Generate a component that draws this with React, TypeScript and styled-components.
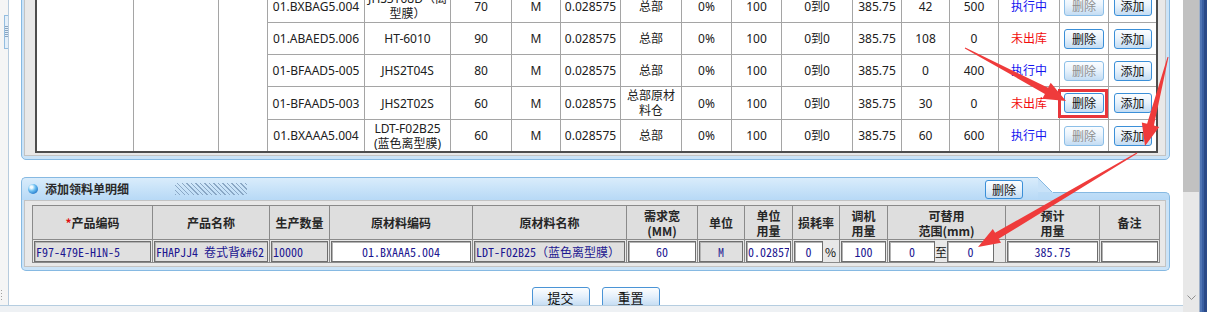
import React from "react";
import styled, { createGlobalStyle } from "styled-components";

const GlobalStyle = createGlobalStyle`
  html, body { margin: 0; padding: 0; background: #fff; }
  body { font-family: "Noto Sans", "Noto Sans CJK SC", sans-serif; font-size: 12px; color: #202020; }
  #root { width: 1207px; height: 312px; overflow: hidden; }
`;

const BLUE_LINE = "#86b9e2";
const PANEL_FILL = "#cbe3f7";
const UI_CJK = `"Noto Sans CJK SC", "Noto Sans", sans-serif`;
const MONO = `"Noto Sans Mono CJK SC", "Liberation Mono", monospace`;

const Screen = styled.div`
  position: relative;
  width: 1207px;
  height: 312px;
  display: flex;
  overflow: hidden;
  background: #fff;
`;

const Workspace = styled.div`
  width: 1183px;
  display: flex;
  flex-direction: column;
`;

const WorkRow = styled.div`
  display: flex;
  height: 305px;
`;

const SideStrip = styled.div`
  width: 9px;
  box-sizing: border-box;
  border-right: 1px solid #b7cbdd;
  background: #f5f5f5;
  display: flex;
  flex-direction: column;
  justify-content: space-between;
  padding: 15px 0 4px 0;
`;

const SideHandle = styled.div`
  align-self: flex-end;
  width: 3px;
  height: 32px;
  border: 1px solid #93bde0;
  border-right: none;
  background: repeating-linear-gradient(to bottom, #8aa5c0 0 1px, #e4eff9 1px 2px) center / 100% 12px no-repeat,
    #e4eff9;
`;

const SideGrip = styled.div`
  width: 4px;
  height: 12px;
  background: radial-gradient(circle, #a0a0a0 0 0.7px, transparent 0.8px) 0 0 / 3px 3px repeat-y;
`;

const Content = styled.main`
  width: 1174px;
  height: 305px;
  box-sizing: border-box;
  padding-left: 12px;
  overflow: hidden;
  background: #fff;
`;

const StatusBar = styled.footer`
  height: 7px;
  box-sizing: border-box;
  border-top: 1px solid #b5cde0;
  background: #eef1f4;
`;

const ScrollBar = styled.div`
  width: 16px;
  height: 312px;
  display: flex;
  flex-direction: column;
  background: #e8e8e8;
`;

const ScrollThumb = styled.div`
  height: 192px;
  background: #c1c1c1;
`;

const ScrollTrack = styled.div`
  flex: 1;
  display: flex;
  align-items: flex-end;
  justify-content: center;
  padding-bottom: 11px;
`;

const WindowEdge = styled.div`
  width: 8px;
  height: 312px;
  background: linear-gradient(to right, #9fb0c8 0 1px, #4f74b4 1px 3px, #3a5fa2 3px 5px, #2b4a88 5px);
`;

/* ---------- framed panel ---------- */

const ListPanel = styled.section`
  width: 1149px;
  box-sizing: border-box;
  margin-top: -18px;
  border: 1px solid ${BLUE_LINE};
  border-radius: 5px;
  background: ${PANEL_FILL};
  padding: 2px 3px 3px 2px;
`;

const PanelInner = styled.div<{ $pad: string }>`
  border: 1px solid #c3c3c3;
  background: #e8e8e8;
  padding: ${(p) => p.$pad};
`;

/* ---------- list table ---------- */

const ListTable = styled.table`
  width: 1123px;
  table-layout: fixed;
  border-collapse: separate;
  border-spacing: 0;
  border: 2px solid #4d4d4d;
  background: #fff;
`;

const ListRow = styled.tr<{ $h: number }>`
  height: ${(p) => p.$h}px;
`;

const ListCell = styled.td<{ $tone?: "run" | "wait"; $span?: boolean }>`
  padding: 0 2px;
  border-right: 1px solid #a5a5a5;
  border-bottom: ${(p) => (p.$span ? "none" : "1px solid #a5a5a5")};
  text-align: center;
  vertical-align: middle;
  font-size: 12px;
  line-height: 15px;
  white-space: nowrap;
  color: ${(p) => (p.$tone === "run" ? "#1414f0" : p.$tone === "wait" ? "#f20d0d" : "#202020")};
  tr:last-child > & { border-bottom: none; }
  &:last-child { border-right: none; }
`;

const RowButton = styled.button<{ $w: number; $off?: boolean }>`
  width: ${(p) => p.$w}px;
  height: 20px;
  padding: 0;
  font-family: ${UI_CJK};
  font-size: 12px;
  line-height: 18px;
  color: ${(p) => (p.$off ? "#8e8e8e" : "#111")};
  border: 1px solid ${(p) => (p.$off ? "#8cbfe8" : "#3a8fd8")};
  border-radius: 3px;
  background: linear-gradient(#fbfdff, #e9f3fc 45%, #c3dcf3);
  cursor: default;
`;

/* ---------- detail panel ---------- */

const DetailPanel = styled.section`
  width: 1149px;
  margin-top: 17px;
`;

const DetailHeader = styled.header`
  display: flex;
  align-items: flex-end;
  height: 23px;
`;

const TabMain = styled.div`
  flex: 1;
  height: 23px;
  box-sizing: border-box;
  border-top: 1px solid ${BLUE_LINE};
  border-left: 1px solid ${BLUE_LINE};
  border-top-left-radius: 5px;
  background: linear-gradient(#d9ecfb, #b7d9f6);
  display: flex;
  align-items: center;
  padding: 0 15px 0 6px;
`;

const TabSlope = styled.div`
  width: 15px;
  height: 23px;
  background: linear-gradient(to top right, #c8e2f8 calc(50% - 0.8px), ${BLUE_LINE} calc(50% - 0.8px) 50%, transparent 50%)
      top / 15px 15px no-repeat,
    linear-gradient(#bddcf6, #b7d9f6) bottom / 15px 8px no-repeat;
`;

const TabRight = styled.div`
  width: 117px;
  height: 8px;
  box-sizing: border-box;
  border-top: 1px solid ${BLUE_LINE};
  border-right: 1px solid ${BLUE_LINE};
  border-top-right-radius: 5px;
  background: linear-gradient(#bfddf7, #b7d9f6);
`;

const Orb = styled.span`
  width: 10px;
  height: 10px;
  border-radius: 50%;
  background: radial-gradient(circle at 35% 32%, #f2fbff 0 12%, #6cc0f2 40%, #2a7fcf 75%, #1b5da6);
`;

const PanelTitle = styled.h2`
  margin: 0 0 0 7px;
  font-family: ${UI_CJK};
  font-size: 12px;
  font-weight: 700;
  color: #2a2a2a;
  line-height: 16px;
`;

const Hatch = styled.span`
  margin-left: 46px;
  width: 72px;
  height: 12px;
  background: repeating-linear-gradient(45deg, #7f9dbc 0 1px, transparent 1px 3.2px);
  opacity: 0.85;
`;

const HeaderButton = styled.button`
  margin-left: auto;
  width: 38px;
  height: 19px;
  padding: 0;
  font-family: ${UI_CJK};
  font-size: 12px;
  line-height: 17px;
  color: #111;
  border: 1px solid #3a8fd8;
  border-radius: 3px;
  background: linear-gradient(#fbfdff, #e9f3fc 45%, #c3dcf3);
`;

const DetailBody = styled.div`
  box-sizing: border-box;
  border: 1px solid ${BLUE_LINE};
  border-top: none;
  border-radius: 0 0 5px 5px;
  background: ${PANEL_FILL};
  padding: 0 3px 3px 2px;
`;

const DetailTable = styled.table`
  width: 1128px;
  table-layout: fixed;
  border-collapse: separate;
  border-spacing: 0;
  border: 1px solid #8a8a8a;
`;

const HeadRow = styled.tr`
  height: 34px;
`;

const HeadCell = styled.th`
  padding: 0;
  background: #dedede;
  border-right: 1px solid #8a8a8a;
  border-bottom: 1px solid #8a8a8a;
  font-family: ${UI_CJK};
  font-size: 12px;
  font-weight: 700;
  line-height: 15px;
  color: #262626;
  text-align: center;
  vertical-align: middle;
  &:last-child { border-right: none; }
`;

const Required = styled.span`
  color: #e01010;
`;

const DataRow = styled.tr`
  height: 22px;
`;

const DataCell = styled.td`
  padding: 0 1px;
  background: #e8e8e8;
  border-right: 1px solid #8a8a8a;
  vertical-align: middle;
  &:last-child { border-right: none; }
`;

const CellFlex = styled.div`
  display: flex;
  align-items: center;
  font-family: ${UI_CJK};
  font-size: 12px;
  color: #111;
`;

const Field = styled.input<{ $ro?: boolean; $align?: string; $w?: number }>`
  box-sizing: border-box;
  width: ${(p) => (p.$w ? `${p.$w}px` : "100%")};
  height: 21px;
  margin: 0;
  padding: 0 1px;
  border: 1px solid #6e6e6e;
  box-shadow: inset 1px 1px 0 #b4b4b4;
  border-radius: 0;
  outline: none;
  background: ${(p) => (p.$ro ? "#e0e0e0" : "#fff")};
  font-family: ${MONO};
  font-size: 12px;
  color: #1c1690;
  text-align: ${(p) => p.$align || "left"};
`;

const Unit = styled.span<{ $gap: number }>`
  margin: 0 ${(p) => p.$gap}px;
`;

/* ---------- actions ---------- */

const Actions = styled.div`
  width: 1149px;
  display: flex;
  justify-content: center;
  gap: 12px;
  margin-top: 16px;
`;

const ActionButton = styled.button`
  width: 58px;
  height: 22px;
  padding: 0;
  font-family: ${UI_CJK};
  font-size: 13px;
  line-height: 20px;
  color: #111;
  border: 1px solid #4a94d6;
  border-radius: 3px;
  background: linear-gradient(#fdfeff, #e3effb 45%, #bcd7f0);
`;

const Annotations = styled.svg`
  position: absolute;
  left: 0;
  top: 0;
  pointer-events: none;
`;

type Row = {
  code: string;
  name: string[];
  width: string;
  store: string[];
  qty: string;
  out: string;
  status: "执行中" | "未出库";
  h: number;
};

const rows: Row[] = [
  { code: "01.BXBAG5.004", name: ["JHS3T08D（离", "型膜）"], width: "70", store: ["总部"], qty: "42", out: "500", status: "执行中", h: 33 },
  { code: "01.ABAED5.006", name: ["HT-6010"], width: "90", store: ["总部"], qty: "108", out: "0", status: "未出库", h: 32 },
  { code: "01-BFAAD5-005", name: ["JHS2T04S"], width: "80", store: ["总部"], qty: "0", out: "400", status: "执行中", h: 32 },
  { code: "01-BFAAD5-003", name: ["JHS2T02S"], width: "60", store: ["总部原材", "料仓"], qty: "30", out: "0", status: "未出库", h: 33 },
  { code: "01.BXAAA5.004", name: ["LDT-F02B25", "(蓝色离型膜)"], width: "60", store: ["总部"], qty: "60", out: "600", status: "执行中", h: 31 },
];

const listCols = [97, 85, 49, 97, 86, 61, 49, 60, 61, 50, 50, 71, 49, 48, 49, 61, 49, 47];
const detailCols = [120, 117, 60, 143, 154, 71, 47, 48, 47, 48, 118, 94, 59];

const PRODUCT_NAME = "FHAPJJ4 卷式背&#62;离型膜";

function Lines({ parts }: { parts: string[] }) {
  return (
    <>
      {parts.map((p, i) => (
        <React.Fragment key={i}>
          {i > 0 && <br />}
          {p}
        </React.Fragment>
      ))}
    </>
  );
}

export default function App() {
  return (
    <>
      <GlobalStyle />
      <Screen>
        <Workspace>
          <WorkRow>
            <SideStrip>
              <SideHandle />
              <SideGrip />
            </SideStrip>
            <Content>
              <ListPanel>
                <PanelInner $pad="2px 7px 2px 10px">
                  <ListTable>
                    <colgroup>
                      {listCols.map((w, i) => (
                        <col key={i} style={{ width: w }} />
                      ))}
                    </colgroup>
                    <tbody>
                      {rows.map((r, i) => (
                        <ListRow key={r.code} $h={r.h}>
                          {i === 0 && (
                            <>
                              <ListCell rowSpan={5} $span />
                              <ListCell rowSpan={5} $span />
                              <ListCell rowSpan={5} $span />
                            </>
                          )}
                          <ListCell>{r.code}</ListCell>
                          <ListCell>
                            <Lines parts={r.name} />
                          </ListCell>
                          <ListCell>{r.width}</ListCell>
                          <ListCell>M</ListCell>
                          <ListCell>0.028575</ListCell>
                          <ListCell>
                            <Lines parts={r.store} />
                          </ListCell>
                          <ListCell>0%</ListCell>
                          <ListCell>100</ListCell>
                          <ListCell>0到0</ListCell>
                          <ListCell>385.75</ListCell>
                          <ListCell>{r.qty}</ListCell>
                          <ListCell>{r.out}</ListCell>
                          <ListCell $tone={r.status === "执行中" ? "run" : "wait"}>{r.status}</ListCell>
                          <ListCell>
                            <RowButton $w={40} $off={r.status === "执行中"} disabled={r.status === "执行中"}>
                              删除
                            </RowButton>
                          </ListCell>
                          <ListCell>
                            <RowButton $w={38}>添加</RowButton>
                          </ListCell>
                        </ListRow>
                      ))}
                    </tbody>
                  </ListTable>
                </PanelInner>
              </ListPanel>

              <DetailPanel>
                <DetailHeader>
                  <TabMain>
                    <Orb />
                    <PanelTitle>添加领料单明细</PanelTitle>
                    <Hatch />
                    <HeaderButton>删除</HeaderButton>
                  </TabMain>
                  <TabSlope />
                  <TabRight />
                </DetailHeader>
                <DetailBody>
                  <PanelInner $pad="4px 5px 3px 7px">
                    <DetailTable>
                      <colgroup>
                        {detailCols.map((w, i) => (
                          <col key={i} style={{ width: w }} />
                        ))}
                      </colgroup>
                      <thead>
                        <HeadRow>
                          <HeadCell>
                            <Required>*</Required>产品编码
                          </HeadCell>
                          <HeadCell>产品名称</HeadCell>
                          <HeadCell>生产数量</HeadCell>
                          <HeadCell>原材料编码</HeadCell>
                          <HeadCell>原材料名称</HeadCell>
                          <HeadCell>
                            需求宽
                            <br />
                            (MM)
                          </HeadCell>
                          <HeadCell>单位</HeadCell>
                          <HeadCell>
                            单位
                            <br />
                            用量
                          </HeadCell>
                          <HeadCell>损耗率</HeadCell>
                          <HeadCell>
                            调机
                            <br />
                            用量
                          </HeadCell>
                          <HeadCell>
                            可替用
                            <br />
                            范围(mm)
                          </HeadCell>
                          <HeadCell>
                            预计
                            <br />
                            用量
                          </HeadCell>
                          <HeadCell>备注</HeadCell>
                        </HeadRow>
                      </thead>
                      <tbody>
                        <DataRow>
                          <DataCell>
                            <Field $ro readOnly value="F97-479E-H1N-5" />
                          </DataCell>
                          <DataCell>
                            <Field $ro readOnly value={PRODUCT_NAME} />
                          </DataCell>
                          <DataCell>
                            <Field $ro readOnly value="10000" />
                          </DataCell>
                          <DataCell>
                            <Field readOnly $align="center" value="01.BXAAA5.004" />
                          </DataCell>
                          <DataCell>
                            <Field $ro readOnly value="LDT-F02B25（蓝色离型膜）" />
                          </DataCell>
                          <DataCell>
                            <Field readOnly $align="center" value="60" />
                          </DataCell>
                          <DataCell>
                            <Field $ro readOnly $align="center" value="M" />
                          </DataCell>
                          <DataCell>
                            <Field readOnly value="0.028575" />
                          </DataCell>
                          <DataCell>
                            <CellFlex>
                              <Field readOnly $align="center" $w={29} value="0" />
                              <Unit $gap={2}>%</Unit>
                            </CellFlex>
                          </DataCell>
                          <DataCell>
                            <Field readOnly $align="center" value="100" />
                          </DataCell>
                          <DataCell>
                            <CellFlex>
                              <Field readOnly $align="center" $w={46} value="0" />
                              <Unit $gap={0}>至</Unit>
                              <Field readOnly $align="center" $w={47} value="0" />
                            </CellFlex>
                          </DataCell>
                          <DataCell>
                            <Field readOnly $align="center" value="385.75" />
                          </DataCell>
                          <DataCell>
                            <Field readOnly value="" />
                          </DataCell>
                        </DataRow>
                      </tbody>
                    </DetailTable>
                  </PanelInner>
                </DetailBody>
              </DetailPanel>

              <Actions>
                <ActionButton>提交</ActionButton>
                <ActionButton>重置</ActionButton>
              </Actions>
            </Content>
          </WorkRow>
          <StatusBar />
        </Workspace>
        <ScrollBar>
          <ScrollThumb />
          <ScrollTrack>
            <svg width="9" height="6" viewBox="0 0 9 6">
              <path d="M0.5 0.5 L4.5 4.5 L8.5 0.5" fill="none" stroke="#8f8f8f" strokeWidth="1" />
            </svg>
          </ScrollTrack>
        </ScrollBar>
        <WindowEdge />
        <Annotations width="1207" height="312" viewBox="0 0 1207 312">
          <rect x="1059.5" y="90.5" width="47" height="26" fill="none" stroke="#e8353a" strokeWidth="3" />
          <polygon
            fill="#ef3b3b"
            points="964.8,48.4 1044.9,93.9 1042.3,98.8 1066,101 1050.7,82.8 1048.1,87.7 965.2,47.6"
          />
          <polygon
            fill="#ef3b3b"
            points="1167.5,56.9 1147.1,123.8 1141.8,122.5 1145,146 1159.2,127 1153.9,125.6 1168.5,57.1"
          />
          <polygon
            fill="#ef3b3b"
            points="1136.75,152.57 995.1,232.8 992.8,228.9 978,247 1001,242.7 998.7,238.8 1137.25,153.43"
          />
        </Annotations>
      </Screen>
    </>
  );
}
